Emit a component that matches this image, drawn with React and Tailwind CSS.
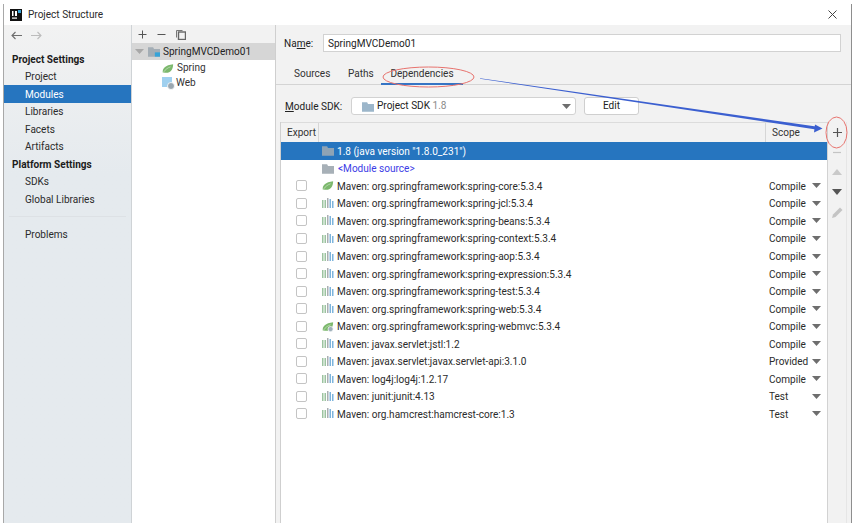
import React from 'react';

const font = { fontFamily: 'Roboto, "Noto Sans", sans-serif' };

const Leaf = ({ badge }) => (
  <svg width="12" height="11" viewBox="0 0 14 12" className="shrink-0">
    <path d="M1 11C0 6 4 2 13 1c0 6-3 10-8 10-2 0-3-1-4 0z" fill="#7cb86d" />
    <path d="M2 10C4 7 7 5 10 4" stroke="#d8ecd2" strokeWidth="0.7" fill="none" />
    {badge && <circle cx="10" cy="9" r="3" fill="#9fb0ba" stroke="#fff" strokeWidth="0.8" />}
  </svg>
);

const Bars = () => (
  <svg width="12" height="11" viewBox="0 0 12 11" className="shrink-0">
    <rect x="0" y="2" width="1.5" height="8" fill="#9cc3a0" />
    <rect x="2.5" y="2" width="1.5" height="8" fill="#9cc3a0" />
    <rect x="5" y="0" width="1.5" height="10" fill="#a9aeb2" />
    <rect x="7.5" y="1" width="1.5" height="9" fill="#7db4dc" />
    <rect x="10" y="3" width="1.5" height="7" fill="#7db4dc" />
  </svg>
);

const Folder = ({ color = '#9aa7b0', children }) => (
  <svg width="12" height="11" viewBox="0 0 14 12" className="shrink-0">
    <path d="M0 1h6l1 2h7v9H0z" fill={color} />
    {children}
  </svg>
);

const Caret = ({ className = '', fill = '#6e6e6e' }) => (
  <svg width="9" height="5" viewBox="0 0 9 5" className={`shrink-0 ${className}`}>
    <path d="M0 0h9L4.500 5z" fill={fill} />
  </svg>
);

const NavItem = ({ label, active }) => (
  <div className={`h-[17.5px] pl-[21px] pt-[2px] flex items-center ${active ? 'bg-[#2675bf] text-white' : 'text-[#2b2b2b]'}`}>
    {label}
  </div>
);

const NavTitle = ({ label }) => (
  <div className="h-[17.5px] pl-2 pt-[2px] flex items-center font-bold text-[#1c1c1c]">{label}</div>
);

const deps = [
  ['org.springframework:spring-core:5.3.4', 'Compile', 'leaf'],
  ['org.springframework:spring-jcl:5.3.4', 'Compile'],
  ['org.springframework:spring-beans:5.3.4', 'Compile'],
  ['org.springframework:spring-context:5.3.4', 'Compile'],
  ['org.springframework:spring-aop:5.3.4', 'Compile'],
  ['org.springframework:spring-expression:5.3.4', 'Compile'],
  ['org.springframework:spring-test:5.3.4', 'Compile'],
  ['org.springframework:spring-web:5.3.4', 'Compile'],
  ['org.springframework:spring-webmvc:5.3.4', 'Compile', 'web'],
  ['javax.servlet:jstl:1.2', 'Compile'],
  ['javax.servlet:javax.servlet-api:3.1.0', 'Provided'],
  ['log4j:log4j:1.2.17', 'Compile'],
  ['junit:junit:4.13', 'Test'],
  ['org.hamcrest:hamcrest-core:1.3', 'Test'],
];

const DepRow = ({ name, scope, icon }) => (
  <div className="h-[17.55px] flex items-center text-[#2b2b2b]">
    <div className="w-[41px] flex justify-center shrink-0">
      <div className="w-[11px] h-[11px] bg-white border border-[#c4c4c4] rounded-[2px] ml-[-1px]" />
    </div>
    <div className="w-[14px] flex justify-start shrink-0">
      {icon === 'leaf' ? <Leaf /> : icon === 'web' ? <Leaf badge /> : <Bars />}
    </div>
    <div className="ml-[1px] flex-1 whitespace-nowrap pt-[2px]">Maven: {name}</div>
    <div className="w-[43px] whitespace-nowrap pt-[2px]">{scope}</div>
    <Caret className="mr-[6px]" />
  </div>
);

const ToolCell = ({ children }) => (
  <div className="h-[19.8px] flex items-center justify-center">{children}</div>
);

export default function App() {
  return (
    <div className="w-[858px] h-[523px] bg-white pt-1 pl-[3px] pr-[6px] overflow-hidden relative text-[10.05px] leading-none" style={font}>
      <div className="h-full border-l border-l-[#a8a8a8] border-r border-r-[#8e8e8e] flex flex-col">
        {/* title bar */}
        <div className="h-[21px] shrink-0 bg-white flex items-center pl-[6px] pr-[13px] text-[#2b2b2b]">
          <svg width="12" height="12" viewBox="0 0 12 12" className="shrink-0">
            <rect width="12" height="12" fill="#111" />
            <rect x="2" y="8.500" width="5" height="1.200" fill="#fff" />
            <rect x="2" y="2" width="1.500" height="5" fill="#fff" />
            <rect x="5" y="2" width="2" height="5" fill="#fff" />
            <rect x="8" y="1" width="3" height="3" fill="#35a3d8" />
          </svg>
          <span className="ml-[6px] flex-1 pt-[2px]">Project Structure</span>
          <svg width="9" height="9" viewBox="0 0 9 9" className="mr-[1px]">
            <path d="M.5.5l8 8M8.500.5l-8 8" stroke="#444" strokeWidth="1" fill="none" />
          </svg>
        </div>

        <div className="flex-1 flex min-h-0">
          {/* sidebar */}
          <div className="w-[128px] shrink-0 bg-gradient-to-b from-[#f2f2f2] to-[#e5eaee] to-[30%] border-r border-r-[#cfd3d6] flex flex-col">
            <div className="h-[21px] flex items-center gap-[9px] pl-[7px]">
              <svg width="11" height="9" viewBox="0 0 11 9"><path d="M11 4.500H1M4.500 1L1 4.500 4.500 8" stroke="#6e6e6e" strokeWidth="1.100" fill="none" /></svg>
              <svg width="11" height="9" viewBox="0 0 11 9"><path d="M0 4.500h10M6.500 1L10 4.500 6.500 8" stroke="#bcbcbc" strokeWidth="1.100" fill="none" /></svg>
            </div>
            <div className="h-[4.25px]" />
            <NavTitle label="Project Settings" />
            <NavItem label="Project" />
            <NavItem label="Modules" active />
            <NavItem label="Libraries" />
            <NavItem label="Facets" />
            <NavItem label="Artifacts" />
            <NavTitle label="Platform Settings" />
            <NavItem label="SDKs" />
            <NavItem label="Global Libraries" />
            <div className="h-[17.5px] flex items-center px-[5px]"><div className="h-px w-full bg-[#dde1e5]" /></div>
            <NavItem label="Problems" />
          </div>

          {/* module tree */}
          <div className="w-[144px] shrink-0 bg-white border-r border-r-[#cfcfcf] flex flex-col">
            <div className="h-[18px] bg-[#f2f2f2] flex items-center gap-[10px] pl-[6px]">
              <svg width="9" height="9" viewBox="0 0 9 9"><path d="M4.500.5v8M.5 4.500h8" stroke="#555" strokeWidth="1" fill="none" /></svg>
              <svg width="9" height="9" viewBox="0 0 9 9"><path d="M.5 4.500h8" stroke="#555" strokeWidth="1" fill="none" /></svg>
              <svg width="10" height="11" viewBox="0 0 10 11"><path d="M.5 1.500h6M.5 1.500v7" stroke="#777" strokeWidth="1" fill="none" /><rect x="2.500" y="3" width="7" height="7.500" fill="none" stroke="#666" strokeWidth="1.400" /></svg>
            </div>
            <div className="h-[17px] bg-[#d6d6d6] flex items-center pl-[3px] text-[#222]">
              <Caret className="mr-[4px]" fill="#a8a8a8" />
              <Folder color="#a3adb5"><rect x="8" y="7" width="6" height="5" fill="#35a3d8" /></Folder>
              <span className="ml-[3px] pt-[2px]">SpringMVCDemo01</span>
            </div>
            <div className="h-[15px] flex items-center pl-[30px] text-[#333] mt-[1px]">
              <Leaf /><span className="ml-[3px]">Spring</span>
            </div>
            <div className="h-[15px] flex items-center pl-[30px] text-[#333]">
              <svg width="14" height="13" viewBox="0 0 14 13" className="shrink-0">
                <rect x="0" y="0" width="10" height="10" fill="#9fd0ef" />
                <circle cx="9" cy="9" r="3.500" fill="#9aa7b0" stroke="#fff" strokeWidth="0.8" />
              </svg>
              <span className="ml-[0px]">Web</span>
            </div>
          </div>

          {/* detail panel */}
          <div className="flex-1 min-w-0 bg-[#f2f2f2] flex flex-col">
            <div className="h-[26px] flex items-center pl-[8px] pr-[10px] mt-[5px] shrink-0 text-[#222]">
              <span className="w-[39px] pt-[2px]">Na<span className="underline">m</span>e:</span>
              <div className="flex-1 h-[18px] bg-white border border-[#d2d2d2] flex items-center pl-[4px] pt-[2px]">SpringMVCDemo01</div>
            </div>
            <div className="h-[29px] flex items-end pl-[18px] shrink-0 border-b border-b-[#d4d4d4] text-[#333]">
              <div className="h-[19px] w-[54px] flex items-center">Sources</div>
              <div className="h-[19px] w-[33px] flex items-center">Paths</div>
              <div className="h-[19px] w-[82px] flex items-center justify-center border-b-2 border-b-[#3574c4] mb-[-1px]">Dependencies</div>
            </div>
            <div className="h-[37px] flex items-start pt-[12px] pl-[9px] shrink-0 text-[#222]">
              <span className="w-[66px] h-[18px] flex items-center pt-[2px]"><span><span className="underline">M</span>odule SDK:</span></span>
              <div className="w-[225px] h-[18px] bg-white border border-[#d2d2d2] rounded-[3px] flex items-center pl-[10px] pr-[4px]">
                <Folder color="#9cb6ca" />
                <span className="ml-[3px] flex-1 pt-[1px]">Project SDK <span className="text-[#8a8a8a]">1.8</span></span>
                <Caret />
              </div>
              <div className="ml-[8px] w-[55px] h-[18px] bg-white border border-[#cfcfcf] rounded-[3px] flex items-center justify-center pt-[1px]">Edit</div>
            </div>
            <div className="flex-1 min-h-0 flex pl-[4px] pr-[4px]">
              <div className="flex-1 min-w-0 bg-white border-l border-l-[#cfcfcf] flex flex-col">
                <div className="h-[20px] shrink-0 bg-[#f2f2f2] flex items-center border-t border-t-[#dcdcdc] text-[#333]">
                  <div className="w-[38px] h-full flex items-center pl-[6px] pt-[1px] border-r border-r-[#d6d6d6]">Export</div>
                  <div className="flex-1" />
                  <div className="w-[62px] h-full flex items-center pl-[6px] pt-[1px] border-l border-l-[#d6d6d6]">Scope</div>
                </div>
                <div className="h-[17.55px] bg-[#2675bf] flex items-center pl-[41px] text-white">
                  <Folder color="#8ea3b5" />
                  <span className="ml-[3px] pt-[2px]">1.8 (java version "1.8.0_231")</span>
                </div>
                <div className="h-[17.55px] flex items-center pl-[41px] text-[#3c3ce6]">
                  <Folder color="#a7b0b7" />
                  <span className="ml-[4px] pt-[2px]">&lt;Module source&gt;</span>
                </div>
                {deps.map(([name, scope, icon]) => (
                  <DepRow key={name} name={name} scope={scope} icon={icon} />
                ))}
              </div>
              <div className="w-[20px] shrink-0 border-l border-l-[#d2d2d2] border-r border-r-[#e6e6e6] flex flex-col pt-[1px]">
                <ToolCell><svg width="11" height="11" viewBox="0 0 11 11"><path d="M5.500 1v9M1 5.500h9" stroke="#555" strokeWidth="1.200" fill="none" /></svg></ToolCell>
                <ToolCell><svg width="10" height="11" viewBox="0 0 10 11"><path d="M1 5.500h8" stroke="#c4c4c4" strokeWidth="1.200" fill="none" /></svg></ToolCell>
                <ToolCell><svg width="10" height="6" viewBox="0 0 10 6"><path d="M0 6h10L5 0z" fill="#c9c9c9" /></svg></ToolCell>
                <ToolCell><svg width="10" height="6" viewBox="0 0 10 6"><path d="M0 0h10L5 6z" fill="#555" /></svg></ToolCell>
                <ToolCell><svg width="11" height="11" viewBox="0 0 11 11"><path d="M0 11l1-3.500L8 .5 10.500 3l-7 7z" fill="#c4c4c4" /></svg></ToolCell>
              </div>
            </div>
          </div>
        </div>
      </div>

      {/* red rings and arrow drawn over the screenshot */}
      <svg width="858" height="523" viewBox="0 0 858 523" className="absolute inset-0 pointer-events-none">
        <ellipse cx="428.500" cy="77" rx="45.500" ry="10" fill="none" stroke="#e8736e" strokeWidth="1" />
        <ellipse cx="836.500" cy="132.500" rx="10.500" ry="15.500" fill="none" stroke="#e8736e" strokeWidth="1" />
        <path d="M480 78.200L480 78.800L816 129.400L816 126.600z" fill="#3b5fd0" />
        <path d="M822.500 128.500L814 132.500L815 124.500z" fill="#3b5fd0" />
      </svg>
    </div>
  );
}
